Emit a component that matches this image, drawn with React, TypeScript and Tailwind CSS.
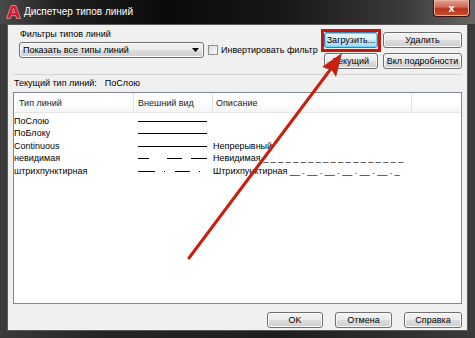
import React from "react";

function Logo() {
  return (
    <svg width="15" height="14" viewBox="0 0 15 14" className="shrink-0">
      <path
        d="M0.5 13.5 L5.2 0.5 L9.8 0.5 L14.5 13.5 L10.6 13.5 L9.7 10.6 L5.3 10.6 L4.4 13.5 Z M6.2 7.8 L8.8 7.8 L7.5 3.6 Z"
        fill="#d8182a"
        fillRule="evenodd"
        stroke="#f3c9c9"
        strokeWidth="0.6"
      />
    </svg>
  );
}

function Btn({
  children,
  className = "",
  focused = false,
}: {
  children: React.ReactNode;
  className?: string;
  focused?: boolean;
}) {
  return (
    <div
      className={
        "h-[16px] rounded-[3px] border flex items-center justify-center whitespace-nowrap text-[9px] leading-none text-black " +
        (focused
          ? "border-[#3c7fb1] bg-[linear-gradient(#eaf6fd,#d9f0fc_50%,#bee6fd_50%,#a7d9f5)] shadow-[inset_0_0_0_1px_#6fd3f8] "
          : "border-[#707070] bg-[linear-gradient(#f2f2f2,#ebebeb_50%,#dddddd_50%,#cfcfcf)] shadow-[inset_0_0_0_1px_#fbfbfb] ") +
        className
      }
    >
      {children}
    </div>
  );
}

function Solid() {
  return <div className="w-[69px] h-px bg-black" />;
}

function Dashed() {
  return (
    <svg width="70" height="3" className="block">
      <line x1="0" y1="1.5" x2="11" y2="1.5" stroke="#000" strokeWidth="1" />
      <line x1="29" y1="1.5" x2="44" y2="1.5" stroke="#000" strokeWidth="1" />
      <line x1="53" y1="1.5" x2="69" y2="1.5" stroke="#000" strokeWidth="1" />
    </svg>
  );
}

function DashDot() {
  return (
    <svg width="70" height="3" className="block">
      <line x1="0" y1="1.5" x2="17" y2="1.5" stroke="#000" strokeWidth="1" />
      <rect x="26" y="1" width="1" height="1" fill="#000" />
      <line x1="37" y1="1.5" x2="52" y2="1.5" stroke="#000" strokeWidth="1" />
      <rect x="61" y="1" width="1" height="1" fill="#000" />
    </svg>
  );
}

const rows: { name: string; sample: React.ReactNode; desc: string }[] = [
  { name: "ПоСлою", sample: <Solid />, desc: "" },
  { name: "ПоБлоку", sample: <Solid />, desc: "" },
  { name: "Continuous", sample: <Solid />, desc: "Непрерывный" },
  {
    name: "невидимая",
    sample: <Dashed />,
    desc: "Невидимая _ _ _ _ _ _ _ _ _ _ _ _ _ _ _ _ _ _ _",
  },
  {
    name: "штрихпунктирная",
    sample: <DashDot />,
    desc: "Штрихпунктирная __ . __ . __ . __ . __ . __ . _",
  },
];

export default function App() {
  return (
    <div className="relative w-[475px] h-[338px] overflow-hidden bg-[linear-gradient(90deg,#3a3a3a,#262626_20%,#1e1e1e_60%,#3a3a3a)] font-['Liberation_Sans',Arial,sans-serif] text-[9px] text-black flex flex-col select-none">
      {/* Title bar */}
      <div className="h-[24px] shrink-0 flex items-center pl-[6px] bg-[linear-gradient(90deg,#4a4a4a,#202020_12%,#0a0a0a_35%,#181818_60%,#3a3a3a_85%,#666666)]">
        <Logo />
        <span className="ml-[3px] text-white text-[10px] leading-none whitespace-nowrap">
          Диспетчер типов линий
        </span>
        <div className="ml-auto mr-[5px] self-start w-[37px] h-[17px] rounded-b-[4px] border border-t-0 border-[#3b1410] bg-[linear-gradient(#e3a192,#cf6650_45%,#b9321c_55%,#c9502f)] shadow-[inset_0_0_0_1px_#e8b0a4] flex items-center justify-center">
          <span className="text-white font-bold text-[11px] leading-none">x</span>
        </div>
      </div>

      {/* Client area */}
      <div className="flex-1 mx-[7px] mb-[7px] bg-[#f0f0f0] border border-[#5a5a5a] flex flex-col">
        {/* Top area */}
        <div className="h-[49px] shrink-0 flex pl-[11px] pr-[5px]">
          <div className="flex flex-col pt-[4px]">
            <div className="h-[11px] leading-[11px] pl-[1px] whitespace-nowrap">Фильтры типов линий</div>
            <div className="mt-[2px] flex items-center">
              <div className="w-[185px] h-[16px] rounded-[3px] border border-[#707070] bg-[linear-gradient(#f2f2f2,#ebebeb_50%,#dddddd_50%,#cfcfcf)] shadow-[inset_0_0_0_1px_#fbfbfb] flex items-center pl-[3px] pr-[4px]">
                <span className="leading-none whitespace-nowrap">Показать все типы линий</span>
                <svg width="7" height="4" viewBox="0 0 7 4" className="ml-auto">
                  <path d="M0 0 L7 0 L3.5 4 Z" fill="#000" />
                </svg>
              </div>
              <div className="ml-[4px] w-[10px] h-[10px] shrink-0 border border-[#8e8f8f] bg-[linear-gradient(135deg,#dcdcdc,#fbfbfb)]" />
              <span className="ml-[3px] leading-none whitespace-nowrap">Инвертировать фильтр</span>
            </div>
          </div>
          <div className="ml-auto pt-[7px] grid grid-cols-[54px_79px] gap-[5px] auto-rows-[16px] shrink-0">
            <Btn focused>Загрузить...</Btn>
            <Btn>Удалить</Btn>
            <Btn>Текущий</Btn>
            <Btn>Вкл подробности</Btn>
          </div>
        </div>

        {/* Current linetype */}
        <div className="mx-[5px] h-[18px] shrink-0 border-t border-[#d5d5d5] flex items-center pl-[1px] whitespace-nowrap">
          <span className="leading-none">Текущий тип линий:</span>
          <span className="ml-[8px] leading-none">ПоСлою</span>
        </div>

        {/* List */}
        <div className="mx-[5px] h-[212px] shrink-0 border border-[#828790] bg-white flex flex-col">
          <div className="h-[20px] shrink-0 flex border-b border-[#e5e5e5] bg-[linear-gradient(#ffffff,#ffffff_50%,#f4f5f7)] text-[#1a1a1a]">
            <div className="w-[119px] pl-[5px] pt-[3px] flex items-center">Тип линий</div>
            <div className="w-[79px] pl-[4px] pt-[3px] flex items-center border-l border-[#e3e3e3]">Внешний вид</div>
            <div className="w-[199px] pl-[3px] pt-[3px] flex items-center border-l border-[#e3e3e3]">Описание</div>
            <div className="flex-1 border-l border-[#e3e3e3]" />
          </div>
          <div className="pt-[2px] flex flex-col">
            {rows.map((r) => (
              <div key={r.name} className="h-[12.5px] flex items-center whitespace-nowrap">
                <div className="w-[124px] leading-none">{r.name}</div>
                <div className="w-[70px] flex items-center">{r.sample}</div>
                <div className="ml-[5px] leading-none whitespace-pre">{r.desc}</div>
              </div>
            ))}
          </div>
        </div>

        {/* Bottom buttons */}
        <div className="flex-1 flex justify-end items-start pt-[8px] pr-[5px] gap-[12px]">
          <Btn className="w-[56px]">OK</Btn>
          <Btn className="w-[57px]">Отмена</Btn>
          <Btn className="w-[58px]">Справка</Btn>
        </div>
      </div>

      {/* Red highlight box */}
      <div className="absolute left-[321px] top-[29px] w-[60px] h-[23px] border-[3px] border-[#c4180c] pointer-events-none" />

      {/* Red arrow */}
      <svg className="absolute left-0 top-0 pointer-events-none" width="475" height="338">
        <line x1="189" y1="258" x2="333" y2="66" stroke="#c8200f" strokeWidth="3" strokeLinecap="round" />
        <path d="M342 53 L336 77 L331 69 L322 67 Z" fill="#c8200f" />
      </svg>
    </div>
  );
}
